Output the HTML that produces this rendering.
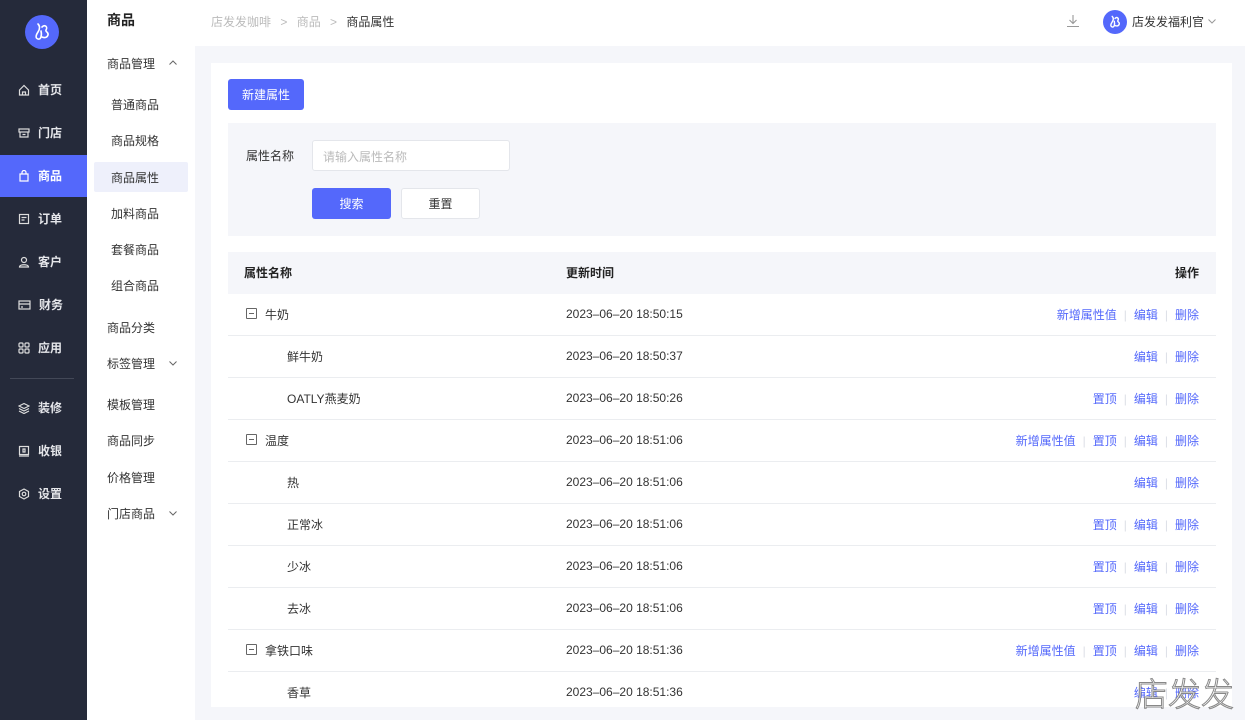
<!DOCTYPE html>
<html><head><meta charset="utf-8"><style>
*{margin:0;padding:0;box-sizing:border-box}
body{width:1245px;height:720px;overflow:hidden;position:relative;font-family:"Liberation Sans","Noto Sans CJK SC",sans-serif;font-size:12px;color:#333;background:#f5f6fa}
.abs{position:absolute}
#side{left:0;top:0;width:87px;height:720px;background:#252a3a}
.mi{position:absolute;left:0;width:87px;height:42px;color:#e5e6ea;font-size:12px;font-weight:bold;display:flex;align-items:center;padding-left:18px;padding-bottom:1px}
.mi svg{margin-right:8px}
.mi.on{background:#5468fb;color:#fff}
#sub{left:87px;top:0;width:108px;height:720px;background:#fff}
.si{position:absolute;font-size:12px;color:#333;margin-top:-1px}
#top{left:195px;top:0;width:1050px;height:46px;background:#fff}
#card{left:211px;top:63px;width:1021px;height:644px;background:#fff}
.btn{position:absolute;border-radius:3px;display:flex;align-items:center;justify-content:center;font-size:12px}
.row{position:absolute;left:228px;width:988px;height:42px;border-bottom:1px solid #ebedf0}
.row span{position:absolute;top:12px}
.row span.d{top:13px}
.ops{position:absolute;right:17px;top:12px;color:#5468fb;white-space:nowrap}
.ops i{font-style:normal;color:#dcdfe6;margin:0 7px}
.exp{display:inline-block;width:11px;height:11px;border:1px solid #666;position:absolute;left:18px;top:14px;border-radius:1px}
.exp:after{content:"";position:absolute;left:2px;top:4px;width:5px;height:1px;background:#666}
</style></head><body>
<div id="side" class="abs">
 <svg class="abs" style="left:25px;top:15px" width="34" height="34" viewBox="0 0 34 34"><circle cx="17" cy="17" r="17" fill="#5468fb"/><path d="M13 9c2 2 2 5 0 8-2 3-3 6 0 7 3 1 4-4 3-8M17 12c3-3 6 0 4 3-1 2 3 2 2 5-1 3-4 3-6 2" stroke="#fff" stroke-width="1.6" fill="none" stroke-linecap="round"/></svg>
 <div class="mi" style="top:69px"><svg width="12" height="12" viewBox="0 0 12 12" fill="none" stroke="#ddd" stroke-width="1.2"><path d="M1.5 6L6 1.5 10.5 6V11h-9z M4.5 11V8h3v3"/></svg>首页</div>
 <div class="mi" style="top:112px"><svg width="12" height="12" viewBox="0 0 12 12" fill="none" stroke="#ddd" stroke-width="1.2"><rect x="1" y="2" width="10" height="3"/><path d="M2 5v5h8V5M4.5 7.5h3"/></svg>门店</div>
 <div class="mi on" style="top:155px"><svg width="12" height="12" viewBox="0 0 12 12" fill="none" stroke="#fff" stroke-width="1.2"><path d="M2 4h8v7H2zM4 4V2.5a2 2 0 014 0V4"/></svg>商品</div>
 <div class="mi" style="top:198px"><svg width="12" height="12" viewBox="0 0 12 12" fill="none" stroke="#ddd" stroke-width="1.2"><rect x="1.5" y="1.5" width="9" height="9"/><path d="M3.5 4.5h5M3.5 7h3"/></svg>订单</div>
 <div class="mi" style="top:241px"><svg width="12" height="12" viewBox="0 0 12 12" fill="none" stroke="#ddd" stroke-width="1.2"><circle cx="6" cy="4" r="2.5"/><path d="M1.5 11c0-3 9-3 9 0z"/></svg>客户</div>
 <div class="mi" style="top:284px"><svg width="13" height="12" viewBox="0 0 13 12" fill="none" stroke="#ddd" stroke-width="1.2"><rect x="1" y="2" width="11" height="8"/><path d="M1 5h11M3 8h2"/></svg>财务</div>
 <div class="mi" style="top:327px"><svg width="12" height="12" viewBox="0 0 12 12" fill="none" stroke="#ddd" stroke-width="1.2"><rect x="1" y="1" width="4" height="4" rx="1"/><rect x="7" y="1" width="4" height="4" rx="1"/><rect x="1" y="7" width="4" height="4" rx="1"/><rect x="7" y="7" width="4" height="4" rx="1"/></svg>应用</div>
 <div class="abs" style="left:10px;top:378px;width:64px;height:1px;background:#434857"></div>
 <div class="mi" style="top:387px"><svg width="12" height="12" viewBox="0 0 12 12" fill="none" stroke="#ddd" stroke-width="1.2"><path d="M6 1.5l5 2.5-5 2.5-5-2.5zM1 6.5l5 2.5 5-2.5M1 9l5 2.5L11 9"/></svg>装修</div>
 <div class="mi" style="top:430px"><svg width="12" height="12" viewBox="0 0 12 12" fill="none" stroke="#ddd" stroke-width="1.2"><rect x="1.5" y="1.5" width="9" height="8"/><path d="M1 11h10M5 4h2v3H5z"/></svg>收银</div>
 <div class="mi" style="top:473px"><svg width="12" height="12" viewBox="0 0 12 12" fill="none" stroke="#ddd" stroke-width="1.2"><path d="M6 1l4.5 2.5v5L6 11 1.5 8.5v-5z"/><circle cx="6" cy="6" r="1.8"/></svg>设置</div>
</div>
<div id="sub" class="abs">
 <div class="si" style="left:20px;top:11px;font-size:14px;font-weight:bold;color:#222">商品</div>
 <div class="si" style="left:20px;top:56px">商品管理</div><svg class="abs" style="left:82px;top:60px" width="8" height="5"><path d="M0.5 4.5l3.5-3.5 3.5 3.5" stroke="#666" fill="none"/></svg>
 <div class="si" style="left:24px;top:97px">普通商品</div>
 <div class="si" style="left:24px;top:133px">商品规格</div>
 <div class="abs" style="left:7px;top:162px;width:94px;height:30px;background:#eef0fb;border-radius:2px"></div>
 <div class="si" style="left:24px;top:170px">商品属性</div>
 <div class="si" style="left:24px;top:206px">加料商品</div>
 <div class="si" style="left:24px;top:242px">套餐商品</div>
 <div class="si" style="left:24px;top:278px">组合商品</div>
 <div class="si" style="left:20px;top:320px">商品分类</div>
 <div class="si" style="left:20px;top:356px">标签管理</div><svg class="abs" style="left:82px;top:361px" width="8" height="5"><path d="M0.5 0.5l3.5 3.5 3.5-3.5" stroke="#666" fill="none"/></svg>
 <div class="si" style="left:20px;top:397px">模板管理</div>
 <div class="si" style="left:20px;top:433px">商品同步</div>
 <div class="si" style="left:20px;top:470px">价格管理</div>
 <div class="si" style="left:20px;top:506px">门店商品</div><svg class="abs" style="left:82px;top:511px" width="8" height="5"><path d="M0.5 0.5l3.5 3.5 3.5-3.5" stroke="#666" fill="none"/></svg>
</div>
<div id="top" class="abs">
 <div class="abs" style="left:16px;top:13px;color:#bbb">店发发咖啡 <span style="margin:0 6px">&gt;</span> 商品 <span style="margin:0 6px">&gt;</span> <b style="color:#333;font-weight:normal">商品属性</b></div>
 <svg class="abs" style="left:871px;top:14px" width="14" height="14" viewBox="0 0 14 14" fill="none" stroke="#999" stroke-width="1.1"><path d="M7 1v8M3.5 6L7 9.5 10.5 6M1 12.5h12"/></svg>
 <svg class="abs" style="left:908px;top:10px" width="24" height="24" viewBox="0 0 34 34"><circle cx="17" cy="17" r="17" fill="#5468fb"/><path d="M13 9c2 2 2 5 0 8-2 3-3 6 0 7 3 1 4-4 3-8M17 12c3-3 6 0 4 3-1 2 3 2 2 5-1 3-4 3-6 2" stroke="#fff" stroke-width="2" fill="none" stroke-linecap="round"/></svg>
 <div class="abs" style="left:937px;top:13px;font-size:12px;color:#333">店发发福利官</div>
 <svg class="abs" style="left:1013px;top:19px" width="8" height="5"><path d="M0.5 0.5l3.5 3.5 3.5-3.5" stroke="#999" fill="none"/></svg>
</div>
<div id="card" class="abs"></div>
<div class="btn" style="left:228px;top:79px;width:76px;height:31px;background:#5468fb;color:#fff">新建属性</div>
<div class="abs" style="left:228px;top:123px;width:988px;height:113px;background:#f5f6fa"></div>
<div class="abs" style="left:246px;top:147px">属性名称</div>
<div class="abs" style="left:312px;top:140px;width:198px;height:31px;background:#fff;border:1px solid #e4e6eb;border-radius:3px;color:#bbb;padding:7px 10px">请输入属性名称</div>
<div class="btn" style="left:312px;top:188px;width:79px;height:31px;background:#5468fb;color:#fff">搜索</div>
<div class="btn" style="left:401px;top:188px;width:79px;height:31px;background:#fff;border:1px solid #e4e6eb;color:#333">重置</div>
<div class="row" style="top:252px;background:#f5f6fa;border:none;font-weight:bold;color:#222"><span style="left:16px">属性名称</span><span style="left:338px">更新时间</span><span style="right:17px">操作</span></div>

<div class="row" style="top:294px"><i class="exp"></i><span style="left:37px">牛奶</span><span class="d" style="left:338px">2023–06–20 18:50:15</span><div class="ops">新增属性值<i>|</i>编辑<i>|</i>删除</div></div>
<div class="row" style="top:336px"><span style="left:59px">鲜牛奶</span><span class="d" style="left:338px">2023–06–20 18:50:37</span><div class="ops">编辑<i>|</i>删除</div></div>
<div class="row" style="top:378px"><span style="left:59px">OATLY燕麦奶</span><span class="d" style="left:338px">2023–06–20 18:50:26</span><div class="ops">置顶<i>|</i>编辑<i>|</i>删除</div></div>
<div class="row" style="top:420px"><i class="exp"></i><span style="left:37px">温度</span><span class="d" style="left:338px">2023–06–20 18:51:06</span><div class="ops">新增属性值<i>|</i>置顶<i>|</i>编辑<i>|</i>删除</div></div>
<div class="row" style="top:462px"><span style="left:59px">热</span><span class="d" style="left:338px">2023–06–20 18:51:06</span><div class="ops">编辑<i>|</i>删除</div></div>
<div class="row" style="top:504px"><span style="left:59px">正常冰</span><span class="d" style="left:338px">2023–06–20 18:51:06</span><div class="ops">置顶<i>|</i>编辑<i>|</i>删除</div></div>
<div class="row" style="top:546px"><span style="left:59px">少冰</span><span class="d" style="left:338px">2023–06–20 18:51:06</span><div class="ops">置顶<i>|</i>编辑<i>|</i>删除</div></div>
<div class="row" style="top:588px"><span style="left:59px">去冰</span><span class="d" style="left:338px">2023–06–20 18:51:06</span><div class="ops">置顶<i>|</i>编辑<i>|</i>删除</div></div>
<div class="row" style="top:630px"><i class="exp"></i><span style="left:37px">拿铁口味</span><span class="d" style="left:338px">2023–06–20 18:51:36</span><div class="ops">新增属性值<i>|</i>置顶<i>|</i>编辑<i>|</i>删除</div></div>
<div class="row" style="top:672px;height:35px;border:none"><span style="left:59px">香草</span><span class="d" style="left:338px">2023–06–20 18:51:36</span><div class="ops">编辑<i>|</i>删除</div></div>
<div class="abs" style="left:1135px;top:676px;font-size:33px;color:#fff;-webkit-text-stroke:1px #888;font-family:'Noto Sans CJK SC',sans-serif;font-weight:300;line-height:1">店发发</div>
</body></html>
